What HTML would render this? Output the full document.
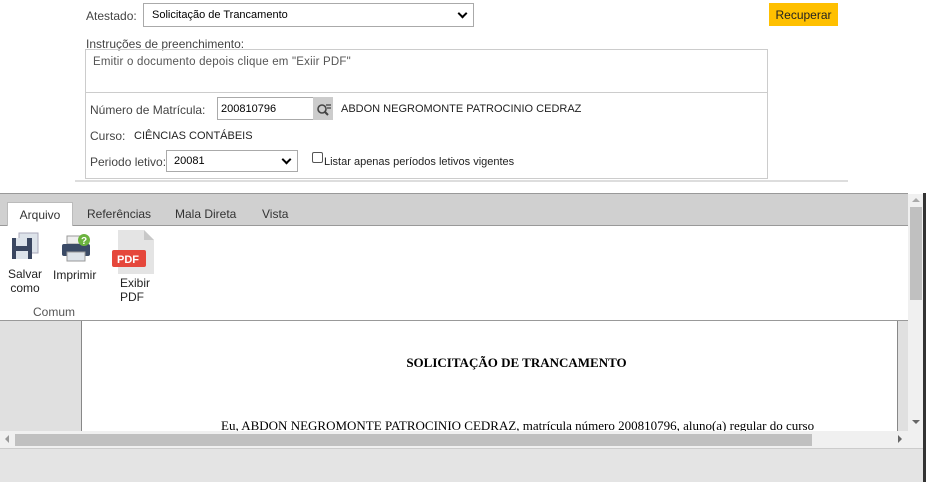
<!DOCTYPE html><html><head><meta charset="utf-8"><style>
*{box-sizing:border-box;margin:0;padding:0}
body{width:926px;height:482px;overflow:hidden;background:#fff;font-family:"Liberation Sans",sans-serif;font-size:12px;color:#222;position:relative}
.a{position:absolute}
.sel{border:1px solid #aaa;background:#fff;font-size:11px;padding:5px 8px;color:#000}
.chev{position:absolute;right:7px;top:6px;width:7px;height:7px;border-right:2px solid #000;border-bottom:2px solid #000;transform:rotate(45deg)}
.lbl{color:#444}
</style></head><body>
<div class="a lbl" style="left:86px;top:9px">Atestado:</div>
<div class="a sel" style="left:143px;top:3px;width:331px;height:24px">Solicitação de Trancamento<span class="chev"></span></div>
<div class="a" style="left:769px;top:3px;width:69px;height:23px;background:#ffc000;font-size:12px;text-align:center;line-height:25px;color:#222">Recuperar</div>
<div class="a lbl" style="left:86px;top:37px">Instruções de preenchimento:</div>
<div class="a" style="left:85px;top:49px;width:683px;height:130px;border:1px solid #ccc"></div>
<div class="a" style="left:86px;top:92px;width:681px;height:1px;background:#ccc"></div>
<div class="a" style="left:93px;top:56px;color:#555;font-size:11.5px;letter-spacing:.2px">Emitir o documento depois clique em "Exiir PDF"</div>
<div class="a lbl" style="left:90px;top:103px">Número de Matrícula:</div>
<div class="a sel" style="left:217px;top:97px;width:97px;height:23px;padding:5px 3px">200810796</div>
<div class="a" style="left:313px;top:97px;width:20px;height:23px;background:#ccc"><svg width="20" height="23"><circle cx="9" cy="12" r="4" fill="none" stroke="#444" stroke-width="1.6"/><line x1="12" y1="15" x2="15" y2="18" stroke="#444" stroke-width="2"/><line x1="13" y1="8" x2="18" y2="8" stroke="#444" stroke-width="1.3"/><line x1="14" y1="11" x2="18" y2="11" stroke="#444" stroke-width="1.3"/></svg></div>
<div class="a" style="left:341px;top:103px;font-size:11px">ABDON NEGROMONTE PATROCINIO CEDRAZ</div>
<div class="a lbl" style="left:90px;top:129px">Curso:</div>
<div class="a" style="left:134px;top:130px;font-size:11px">CIÊNCIAS CONTÁBEIS</div>
<div class="a lbl" style="left:90px;top:155px">Periodo letivo:</div>
<div class="a sel" style="left:166px;top:150px;width:132px;height:22px;padding:4px 7px">20081<span class="chev" style="top:5px"></span></div>
<div class="a" style="left:312px;top:152px;width:11px;height:11px;border:1px solid #555;border-radius:2px"></div>
<div class="a" style="left:324px;top:156px;font-size:11px">Listar apenas períodos letivos vigentes</div>
<div class="a" style="left:75px;top:180px;width:773px;height:2px;background:#ddd"></div>

<div class="a" style="left:0;top:193px;width:908px;height:33px;background:#d0d0d0;border-top:1px solid #999;border-bottom:1px solid #999"></div>
<div class="a" style="left:7px;top:202px;width:66px;height:25px;background:#fff;border:1px solid #bbb;border-bottom:none;text-align:center;line-height:24px;color:#333">Arquivo</div>
<div class="a" style="left:87px;top:207px;color:#333">Referências</div>
<div class="a" style="left:175px;top:207px;color:#333">Mala Direta</div>
<div class="a" style="left:262px;top:207px;color:#333">Vista</div>
<div class="a" style="left:0;top:226px;width:908px;height:95px;background:#fff;border-bottom:1px solid #999"></div>
<svg class="a" style="left:10px;top:232px" width="30" height="30"><rect x="9" y="1" width="19" height="20" fill="#dde3ea" stroke="#aab"/><rect x="2" y="6" width="20" height="21" fill="#3a4660"/><rect x="6" y="6" width="11" height="8" fill="#dde3ea"/><rect x="6" y="19" width="12" height="8" fill="#dde3ea"/></svg>
<div class="a" style="left:8px;top:267px;text-align:center;line-height:14px;color:#222">Salvar<br>como</div>
<svg class="a" style="left:60px;top:233px" width="32" height="30"><rect x="7" y="3" width="14" height="8" fill="#eee" stroke="#999"/><rect x="2" y="11" width="28" height="12" rx="2" fill="#3a4a66"/><rect x="7" y="19" width="18" height="9" fill="#dde3ea" stroke="#999"/><circle cx="24" cy="7" r="6" fill="#6cb33f"/><text x="21" y="11" font-size="10" font-weight="bold" fill="#fff" font-family="Liberation Sans">?</text></svg>
<div class="a" style="left:53px;top:268px;color:#222">Imprimir</div>
<svg class="a" style="left:112px;top:229px" width="42" height="46"><path d="M6 1h26l10 10v34H6z" fill="#e4e4e4"/><path d="M32 1v10h10z" fill="#c8c8c8"/><rect x="0" y="21" width="34" height="17" rx="2" fill="#e5473b"/><text x="5" y="34" font-size="11" font-weight="bold" fill="#fff" font-family="Liberation Sans">PDF</text></svg>
<div class="a" style="left:120px;top:276px;line-height:14px;color:#222">Exibir<br>PDF</div>
<div class="a" style="left:33px;top:305px;color:#555">Comum</div>

<div class="a" style="left:0;top:321px;width:82px;height:110px;background:#e0e0e0;border-right:1px solid #888"></div>
<div class="a" style="left:897px;top:321px;width:11px;height:110px;background:#e0e0e0;border-left:1px solid #888"></div>
<div class="a" style="left:0;top:355px;width:1033px;text-align:center;font-family:'Liberation Serif',serif;font-weight:bold;font-size:13px;color:#000">SOLICITAÇÃO DE TRANCAMENTO</div>
<div class="a" style="left:221px;top:418px;font-family:'Liberation Serif',serif;font-size:13px;color:#000;white-space:nowrap">Eu, ABDON NEGROMONTE PATROCINIO CEDRAZ, matrícula número 200810796, aluno(a) regular do curso</div>
<div class="a" style="left:0;top:431px;width:908px;height:17px;background:#f0f0f0"></div>
<div class="a" style="left:15px;top:434px;width:797px;height:12px;background:#c0c0c0"></div>
<div class="a" style="left:5px;top:435px;width:0;height:0;border:4px solid transparent;border-right-color:#999;border-left:none"></div>
<div class="a" style="left:898px;top:435px;width:0;height:0;border:4px solid transparent;border-left-color:#666;border-right:none"></div>
<div class="a" style="left:908px;top:194px;width:16px;height:254px;background:#f0f0f0"></div>
<div class="a" style="left:910px;top:207px;width:12px;height:93px;background:#c0c0c0"></div>
<div class="a" style="left:912px;top:198px;border:4px solid transparent;border-bottom-color:#aaa;border-top:none"></div>
<div class="a" style="left:912px;top:420px;border:4px solid transparent;border-top-color:#666;border-bottom:none"></div>
<div class="a" style="left:0;top:448px;width:924px;height:34px;background:#e4e4e4;border-top:1px solid #ccc"></div>
<div class="a" style="left:923px;top:193px;width:3px;height:289px;background:#333"></div>
</body></html>
